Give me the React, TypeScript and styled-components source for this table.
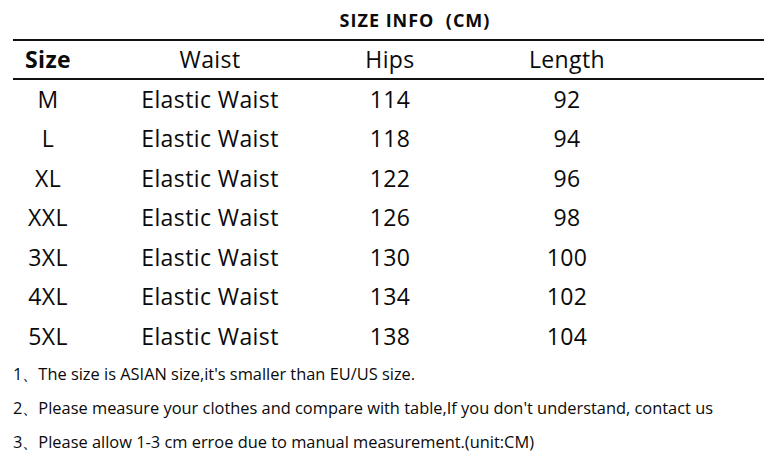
import React from 'react';
import styled, { createGlobalStyle } from 'styled-components';

const GlobalStyle = createGlobalStyle`
  *, *::before, *::after {
    box-sizing: border-box;
  }
  html, body {
    margin: 0;
    padding: 0;
    background: #ffffff;
  }
  body {
    font-family: "Open Sans", "Noto Sans", "Liberation Sans", sans-serif;
    color: #0a0a0a;
  }
`;

const Page = styled.div`
  width: 764px;
  height: 469px;
  overflow: hidden;
  display: flex;
  flex-direction: column;

  & > * {
    flex-shrink: 0;
  }
`;

const Title = styled.div`
  height: 39px;
  display: flex;
  align-items: center;
  justify-content: center;
  padding-left: 66px;
  font-size: 18px;
  font-weight: 700;
  letter-spacing: 1px;
  white-space: pre;
`;

const Table = styled.div`
  margin-left: 13px;
  display: grid;
  grid-template-columns: 70px 254px 106px 248px 1fr;
`;

const Row = styled.div<{ $head?: boolean }>`
  display: contents;

  & > div {
    height: ${({ $head }) => ($head ? '41px' : '39.5px')};
    border-top: ${({ $head }) => ($head ? '2px solid #111' : 'none')};
    border-bottom: ${({ $head }) => ($head ? '2px solid #111' : 'none')};
  }
`;

const Cell = styled.div<{ $bold?: boolean }>`
  display: flex;
  align-items: center;
  justify-content: center;
  padding-bottom: 2px;
  font-size: 23px;
  letter-spacing: 0.4px;
  font-weight: ${({ $bold }) => ($bold ? 700 : 400)};
  white-space: nowrap;
`;

const Notes = styled.div`
  padding: 0 0 0 13px;
  display: flex;
  flex-direction: column;
`;

const Note = styled.div`
  height: 34px;
  display: flex;
  align-items: center;
  font-size: 16.4px;
  white-space: nowrap;
`;

const rows = [
  ['M', 'Elastic Waist', '114', '92'],
  ['L', 'Elastic Waist', '118', '94'],
  ['XL', 'Elastic Waist', '122', '96'],
  ['XXL', 'Elastic Waist', '126', '98'],
  ['3XL', 'Elastic Waist', '130', '100'],
  ['4XL', 'Elastic Waist', '134', '102'],
  ['5XL', 'Elastic Waist', '138', '104'],
];

const notes = [
  "1、The size is ASIAN size,it's smaller than EU/US size.",
  "2、Please measure your clothes and compare with table,If you don't understand, contact us",
  '3、Please allow 1-3 cm erroe due to manual measurement.(unit:CM)',
];

export default function App() {
  return (
    <Page>
      <GlobalStyle />
      <Title>{'SIZE INFO  (CM)'}</Title>
      <Table>
        <Row $head>
          <Cell $bold>Size</Cell>
          <Cell>Waist</Cell>
          <Cell>Hips</Cell>
          <Cell>Length</Cell>
          <Cell />
        </Row>
        {rows.map((r) => (
          <Row key={r[0]}>
            {r.map((v, i) => (
              <Cell key={i}>{v}</Cell>
            ))}
            <Cell />
          </Row>
        ))}
      </Table>
      <Notes>
        {notes.map((n) => (
          <Note key={n}>{n}</Note>
        ))}
      </Notes>
    </Page>
  );
}
